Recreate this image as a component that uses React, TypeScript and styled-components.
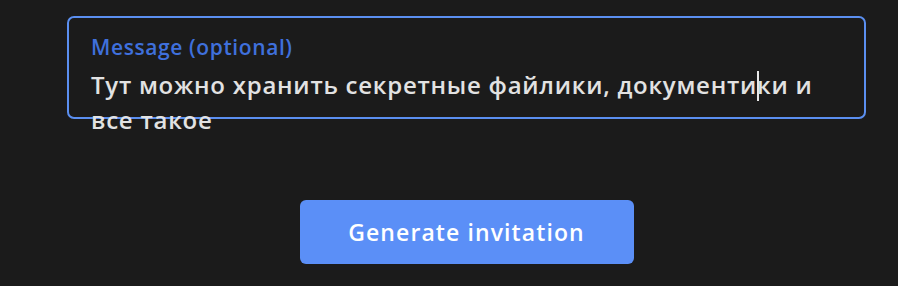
import styled, { createGlobalStyle } from 'styled-components'

const GlobalStyle = createGlobalStyle`
  html, body {
    margin: 0;
    padding: 0;
    background: #1b1b1b;
    font-family: "Open Sans", "Noto Sans", sans-serif;
  }
`

const Page = styled.div`
  width: 898px;
  height: 286px;
  box-sizing: border-box;
  padding: 16px 0 0 67px;
  overflow: hidden;
`

const Form = styled.div`
  width: 799px;
  display: flex;
  flex-direction: column;
  align-items: center;
`

const Field = styled.div`
  width: 100%;
  height: 103px;
  box-sizing: border-box;
  border: 2px solid #5b8ff0;
  border-radius: 7px;
  padding: 16px 22px 0;
`

const Label = styled.div`
  color: #3f70dc;
  font-size: 21px;
  line-height: 26px;
  letter-spacing: 0.6px;
  font-weight: 600;
`

const Value = styled.div`
  color: #e2e2e2;
  font-size: 24px;
  line-height: 35px;
  letter-spacing: 0.75px;
  margin-top: 7px;
  font-weight: 600;
`

const Caret = styled.span`
  display: inline-block;
  width: 0;
  height: 30px;
  border-left: 2px solid #e8e8e8;
  vertical-align: -7px;
  margin-right: -2px;
`

const Button = styled.button`
  margin-top: 81px;
  width: 334px;
  height: 64px;
  border: none;
  border-radius: 6px;
  background: #5b8ff7;
  color: #ffffff;
  font-family: inherit;
  font-size: 23px;
  letter-spacing: 1.1px;
  font-weight: 600;
  cursor: pointer;
`

export default function App() {
  return (
    <>
      <GlobalStyle />
      <Page>
        <Form>
          <Field>
            <Label>Message (optional)</Label>
            <Value>
              Тут можно хранить секретные файлики, документи<Caret />ки и все такое
            </Value>
          </Field>
          <Button>Generate invitation</Button>
        </Form>
      </Page>
    </>
  )
}
